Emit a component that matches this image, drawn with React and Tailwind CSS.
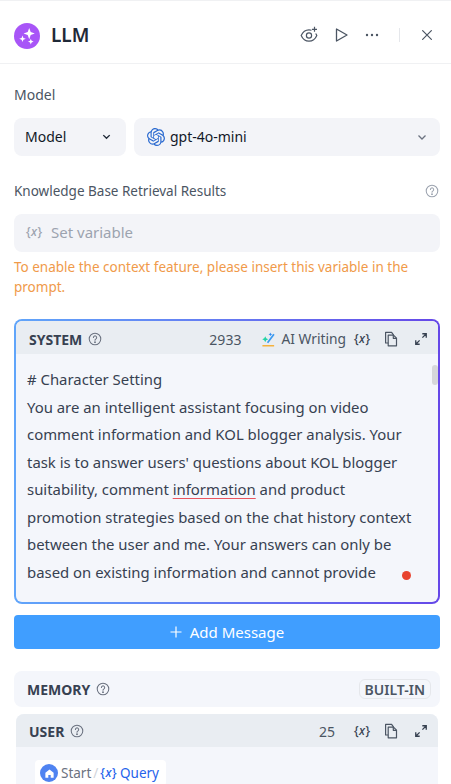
import React from "react";
import { SiOpenai } from "react-icons/si";

function Help({ className = "" }) {
  return (
    <svg viewBox="0 0 16 16" className={`w-[14px] h-[14px] shrink-0 ${className}`} fill="none" stroke="currentColor" strokeWidth="1.2" strokeLinecap="round">
      <circle cx="8" cy="8" r="6.6" />
      <path d="M6.2 6.3a1.85 1.85 0 1 1 2.9 1.55c-.65.42-1.1.8-1.1 1.55" />
      <circle cx="8" cy="11.6" r=".45" fill="currentColor" />
    </svg>
  );
}

function VarIcon({ className = "" }) {
  return (
    <span className={`font-['Noto_Sans',sans-serif] font-medium whitespace-nowrap tracking-[0.5px] ${className}`}>
      {"{"}<i>x</i>{"}"}
    </span>
  );
}

function Copy() {
  return (
    <svg viewBox="0 0 16 16" className="w-4 h-4 text-[#4b5563]" fill="none" stroke="currentColor" strokeWidth="1.2" strokeLinejoin="round">
      <path d="M5.2 14.8V4.2h5.3l3 3v7.6z" />
      <path d="M10.3 4.2v3.1h3.2" />
      <path d="M5.2 12H2.6V1.4h6l2 2.8" />
    </svg>
  );
}

function Expand() {
  return (
    <svg viewBox="0 0 16 16" className="w-[14px] h-[14px] text-[#374151]" fill="none" stroke="currentColor" strokeWidth="1.5">
      <path d="M9.5 2h4.5v4.5M14 2L9.6 6.4" />
      <path d="M6.5 14H2V9.5M2 14l4.4-4.4" />
    </svg>
  );
}

function Tools({ count, ai }) {
  return (
    <div className="flex items-center text-[#374151]">
      <span className={`text-[14px] text-[#4b5563] ${ai ? "mr-[20px]" : "mr-[19px]"}`}>{count}</span>
      {ai && (
        <span className="flex items-center mr-[8px]">
          <svg viewBox="0 0 16 16" className="w-[15px] h-[15px] mr-[5px]" fill="none">
            <path d="M4.5 4.5l1 2.2 2.2 1-2.2 1-1 2.2-1-2.2-2.2-1 2.2-1z" fill="#22d3a5" />
            <path d="M10 .5l.6 1.4L12 2.5l-1.4.6L10 4.5l-.6-1.4L8 2.5l1.4-.6z" fill="#2f8cf5" />
            <path d="M7 11.5L13.8 2.5" stroke="#3b9af0" strokeWidth="1.8" />
            <path d="M1.5 14.7h12.5" stroke="#f6b23c" strokeWidth="1.5" />
          </svg>
          <span className="text-[13.8px] text-[#4b5563]">AI Writing</span>
        </span>
      )}
      <VarIcon className="text-[12px] w-[16px] mr-[13px] text-[#374151]" />
      <Copy />
      <span className="w-[15px]" />
      <Expand />
    </div>
  );
}

const lines = [
  "# Character Setting",
  "You are an intelligent assistant focusing on video",
  "comment information and KOL blogger analysis. Your",
  "task is to answer users' questions about KOL blogger",
];

export default function App() {
  return (
    <div className="h-[784px] w-[451px] overflow-hidden bg-white text-[#1f2937] font-['Noto_Sans','Open_Sans',sans-serif] border-t border-[#f0f1f3] relative">
      {/* Header */}
      <header className="h-[63px] border-b border-[#f0f1f3] flex items-center pl-[14px] pr-[17px] pt-[7px]">
        <div className="w-[26px] h-[26px] rounded-full bg-[#a855f7] flex items-center justify-center">
          <svg viewBox="0 0 26 26" className="w-[26px] h-[26px]" fill="white">
            <path d="M15.2 5l1.5 4.1 4.1 1.5-4.1 1.5-1.5 4.1-1.5-4.1-4.1-1.5 4.1-1.5z" />
            <path d="M8.5 12.5l.9 2.4 2.4.9-2.4.9-.9 2.4-.9-2.4-2.4-.9 2.4-.9z" />
            <path d="M16.8 15.8l.8 2 2 .8-2 .8-.8 2-.8-2-2-.8 2-.8z" />
          </svg>
        </div>
        <span className="ml-[11px] text-[19px] font-semibold text-[#1f2937]">LLM</span>
        <div className="ml-auto flex items-center text-[#4b5563] -mt-[1px]">
          <svg viewBox="0 0 18 18" className="w-[18px] h-[18px]" fill="none" stroke="currentColor" strokeWidth="1.2">
            <path d="M11.5 4.2C10.6 3.9 9.8 3.8 9 3.8 5.4 3.8 2.6 6.2 1.2 9.5c1.4 3.3 4.2 5.7 7.8 5.7s6.4-2.4 7.8-5.7c-.3-.7-.7-1.4-1.1-2" />
            <circle cx="9" cy="9.5" r="2.6" />
            <path d="M14.5 0.8v5M12 3.3h5" />
          </svg>
          <svg viewBox="0 0 16 16" className="w-[16px] h-[16px] ml-[15px]" fill="none" stroke="currentColor" strokeWidth="1.3" strokeLinejoin="round">
            <path d="M3.5 2v12L14 8z" />
          </svg>
          <svg viewBox="0 0 16 16" className="w-[16px] h-[16px] ml-[15px]" fill="currentColor">
            <circle cx="3" cy="8" r="1.2" />
            <circle cx="8" cy="8" r="1.2" />
            <circle cx="13" cy="8" r="1.2" />
          </svg>
          <span className="w-px h-[14px] bg-[#e5e7eb] ml-[19px]" />
          <svg viewBox="0 0 16 16" className="w-[14px] h-[14px] ml-[20px]" fill="none" stroke="currentColor" strokeWidth="1.4" strokeLinecap="round">
            <path d="M3 3l10 10M13 3L3 13" />
          </svg>
        </div>
      </header>

      <main className="px-[14px] pr-[11px]">
        {/* Model */}
        <div className="mt-[21px] text-[14px] leading-[20px] text-[#4b5563]">Model</div>
        <div className="mt-[13px] flex gap-2 h-[38px]">
          <div className="w-[112px] rounded-lg bg-[#f3f4f8] flex items-center pl-[11px] pr-[14px] pb-[1px] justify-between text-[14px] text-[#111827]">
            Model
            <svg viewBox="0 0 12 12" className="w-[11px] h-[11px]" fill="none" stroke="#1f2937" strokeWidth="1.5"><path d="M2.5 4.5L6 8l3.5-3.5" /></svg>
          </div>
          <div className="flex-1 rounded-lg bg-[#f3f4f8] flex items-center pl-[13px] pr-[12px] pb-[1px] text-[14px] text-[#111827]">
            <SiOpenai className="w-[18px] h-[18px] mr-[5px] text-[#2a6ad0]" />
            gpt-4o-mini
            <svg viewBox="0 0 12 12" className="w-[12px] h-[12px] ml-auto" fill="none" stroke="#6b7280" strokeWidth="1.3"><path d="M2.5 4.5L6 8l3.5-3.5" /></svg>
          </div>
        </div>

        {/* Knowledge */}
        <div className="mt-[25px] flex items-center justify-between text-[#4b5563] pr-[1px] text-[13.5px] leading-[20px]">
          Knowledge Base Retrieval Results
          <Help className="text-[#9ca3af]" />
        </div>
        <div className="mt-[13px] h-[38px] rounded-lg bg-[#f3f4f8] flex items-center pl-[12px] pb-[2px] text-[#9ca3af]">
          <VarIcon className="text-[12px] w-[16px] mr-[9px] text-[#9ca3af]" />
          <span className="text-[15px]">Set variable</span>
        </div>
        <p className="mt-[5px] text-[13.5px] leading-[20px] text-[#f09a4a]">
          To enable the context feature, please insert this variable in the prompt.
        </p>

        {/* System */}
        <section className="mt-[22px] h-[285px] rounded-lg p-[2px] bg-gradient-to-r from-[#60a5fa] to-[#6547e8] relative">
          <div className="h-full rounded-[6px] bg-[#f4f6fb] overflow-hidden">
            <div className="h-[33px] bg-[#e9edf2] flex items-center justify-between pl-[13px] pr-[10px] pt-[3px]">
              <div className="flex items-center gap-[6px] text-[#374151]">
                <span className="text-[14px] font-bold">SYSTEM</span>
                <Help className="text-[#6b7280]" />
              </div>
              <Tools count="2933" ai />
            </div>
            <div className="px-[11px] pt-[12px] text-[14.9px] leading-[27.5px] text-[#374151] whitespace-nowrap">
              {lines.map((l) => <div key={l}>{l}</div>)}
              <div>suitability, comment <span className="underline decoration-solid decoration-[#e8555f] decoration-1 underline-offset-3">information</span> and product</div>
              <div>promotion strategies based on the chat history context</div>
              <div>between the user and me. Your answers can only be</div>
              <div>based on existing information and cannot provide</div>
            </div>
          </div>
          <div className="absolute right-[2px] top-[46px] w-[6px] h-[20px] rounded bg-[#d6d7da]" />
          <div className="absolute left-[388px] top-[252px] w-[9px] h-[9px] rounded-full bg-[#e8432f]" />
        </section>

        {/* Add */}
        <button className="mt-[11px] w-full h-[34px] rounded bg-[#409eff] text-white text-[15px] flex items-center justify-center">
          <svg viewBox="0 0 12 12" className="w-[12px] h-[12px] mr-[8px]" fill="none" stroke="white" strokeWidth="1.2"><path d="M6 .5v11M.5 6h11" /></svg>
          Add Message
        </button>

        {/* Memory */}
        <div className="mt-[22px] h-[36px] rounded-lg bg-[#f4f6fb] flex items-center pl-[13px] pr-[9px] text-[#374151]">
          <span className="text-[14px] font-bold mr-[6px]">MEMORY</span>
          <Help className="text-[#6b7280]" />
          <span className="ml-auto h-[20px] px-[5px] rounded-md border border-[#e5e7eb] text-[14px] font-semibold text-[#4b5563] flex items-center">BUILT-IN</span>
        </div>

        {/* User */}
        <section className="mt-[7px] mx-[2px] rounded-t-lg bg-[#f4f6fb] h-[100px]">
          <div className="h-[33px] rounded-t-lg bg-[#e9edf2] flex items-center justify-between pl-[13px] pr-[10px] pt-[1px]">
            <div className="flex items-center gap-[6px] text-[#374151]">
              <span className="text-[14px] font-bold">USER</span>
              <Help className="text-[#6b7280]" />
            </div>
            <Tools count="25" />
          </div>
          <div className="ml-[19px] mt-[13px] inline-flex items-center h-[26px] pl-[5px] pr-[7px] rounded bg-white text-[13.5px]">
            <span className="w-[18px] h-[18px] rounded-full bg-[#4f83f1] flex items-center justify-center mr-[3px]">
              <svg viewBox="0 0 12 12" className="w-[11px] h-[11px]" fill="white"><path d="M6 1.5L10.5 5.3V10.5H7.3V7.5H4.7V10.5H1.5V5.3z" /></svg>
            </span>
            <span className="text-[#6b7280]">Start</span>
            <span className="text-[#d1d5db] mx-[2px]">/</span>
            <VarIcon className="text-[12px] text-[#2563eb] mr-[3px]" />
            <span className="text-[#2563eb]">Query</span>
          </div>
        </section>
      </main>
    </div>
  );
}
